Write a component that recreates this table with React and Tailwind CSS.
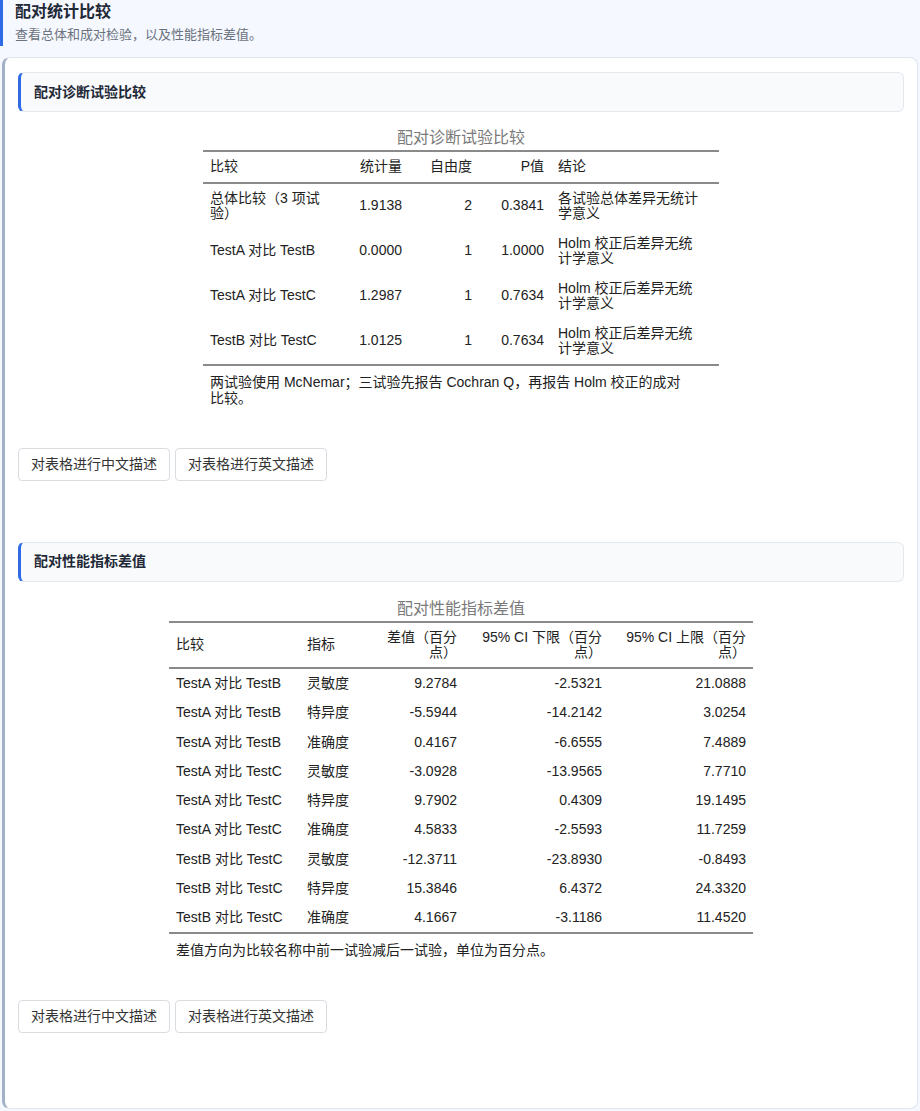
import React from "react";

const FONT = { fontFamily: '"Liberation Sans", "Noto Sans CJK SC", sans-serif' };

function SectionHeader({ title }) {
  return (
    <div className="h-[40px] flex items-center rounded-[6px] border border-[#e3e8ef] border-l-[3px] border-l-[#2f6be6] bg-[#f8fafc] pl-[13px]">
      <span className="text-[14px] font-bold text-[#1f2937]">{title}</span>
    </div>
  );
}

function Buttons() {
  return (
    <div className="flex gap-[5px] mt-[42px]">
      <button className="h-[33px] px-[12px] rounded-[4px] border border-[#d9dce1] bg-white text-[14px] text-[#333]">
        对表格进行中文描述
      </button>
      <button className="h-[33px] px-[12px] rounded-[4px] border border-[#d9dce1] bg-white text-[14px] text-[#333]">
        对表格进行英文描述
      </button>
    </div>
  );
}

const t1 = [
  [["总体比较（3 项试", "验）"], "1.9138", "2", "0.3841", ["各试验总体差异无统计", "学意义"]],
  [["TestA 对比 TestB"], "0.0000", "1", "1.0000", ["Holm 校正后差异无统", "计学意义"]],
  [["TestA 对比 TestC"], "1.2987", "1", "0.7634", ["Holm 校正后差异无统", "计学意义"]],
  [["TestB 对比 TestC"], "1.0125", "1", "0.7634", ["Holm 校正后差异无统", "计学意义"]],
];

const t2 = [
  ["TestA 对比 TestB", "灵敏度", "9.2784", "-2.5321", "21.0888"],
  ["TestA 对比 TestB", "特异度", "-5.5944", "-14.2142", "3.0254"],
  ["TestA 对比 TestB", "准确度", "0.4167", "-6.6555", "7.4889"],
  ["TestA 对比 TestC", "灵敏度", "-3.0928", "-13.9565", "7.7710"],
  ["TestA 对比 TestC", "特异度", "9.7902", "0.4309", "19.1495"],
  ["TestA 对比 TestC", "准确度", "4.5833", "-2.5593", "11.7259"],
  ["TestB 对比 TestC", "灵敏度", "-12.3711", "-23.8930", "-0.8493"],
  ["TestB 对比 TestC", "特异度", "15.3846", "6.4372", "24.3320"],
  ["TestB 对比 TestC", "准确度", "4.1667", "-3.1186", "11.4520"],
];

function Lines({ parts }) {
  return parts.map((p, i) => (
    <React.Fragment key={i}>
      {i > 0 && <br />}
      {p}
    </React.Fragment>
  ));
}

const c1 = "py-[7px] px-[7px] leading-[15.5px] font-normal align-middle whitespace-nowrap";
const c2 = "py-[7px] px-[7px] leading-[15.25px] font-normal align-middle whitespace-nowrap";

function Table1() {
  return (
    <div className="w-[516px] mx-auto mt-[14px] text-[14px] text-[#222]">
      <div className="text-center text-[16px] leading-[24px] text-[#7a7a7a]">配对诊断试验比较</div>
      <table className="w-[516px] table-fixed border-collapse">
        <colgroup>
          <col className="w-[127px]" />
          <col className="w-[79px]" />
          <col className="w-[70px]" />
          <col className="w-[72px]" />
          <col className="w-[168px]" />
        </colgroup>
        <thead>
          <tr className="border-t-2 border-b-2 border-[#8a8a8a]">
            <th className={`${c1} text-left`}>比较</th>
            <th className={`${c1} text-right`}>统计量</th>
            <th className={`${c1} text-right`}>自由度</th>
            <th className={`${c1} text-right`}>P值</th>
            <th className={`${c1} text-left`}>结论</th>
          </tr>
        </thead>
        <tbody className="border-b-2 border-[#8a8a8a]">
          {t1.map((r, i) => (
            <tr key={i}>
              <td className={`${c1} text-left`}><Lines parts={r[0]} /></td>
              <td className={`${c1} text-right`}>{r[1]}</td>
              <td className={`${c1} text-right`}>{r[2]}</td>
              <td className={`${c1} text-right`}>{r[3]}</td>
              <td className={`${c1} text-left`}><Lines parts={r[4]} /></td>
            </tr>
          ))}
        </tbody>
      </table>
      <div className="pt-[8px] px-[7px] leading-[16px]">
        两试验使用 McNemar；三试验先报告 Cochran Q，再报告 Holm 校正的成对
        <br />
        比较。
      </div>
    </div>
  );
}

function Table2() {
  return (
    <div className="w-[584px] mx-auto mt-[15px] text-[14px] text-[#222]">
      <div className="text-center text-[16px] leading-[24px] text-[#7a7a7a]">配对性能指标差值</div>
      <table className="w-[584px] table-fixed border-collapse">
        <colgroup>
          <col className="w-[131px]" />
          <col className="w-[71px]" />
          <col className="w-[93px]" />
          <col className="w-[145px]" />
          <col className="w-[144px]" />
        </colgroup>
        <thead>
          <tr className="border-t-2 border-b-2 border-[#8a8a8a]">
            <th className={`${c2} text-left`}>比较</th>
            <th className={`${c2} text-left`}>指标</th>
            <th className={`${c2} text-right`}>差值（百分<br />点）</th>
            <th className={`${c2} text-right`}>95% CI 下限（百分<br />点）</th>
            <th className={`${c2} text-right`}>95% CI 上限（百分<br />点）</th>
          </tr>
        </thead>
        <tbody className="border-b-2 border-[#8a8a8a]">
          {t2.map((r, i) => (
            <tr key={i}>
              <td className={`${c2} text-left`}>{r[0]}</td>
              <td className={`${c2} text-left`}>{r[1]}</td>
              <td className={`${c2} text-right`}>{r[2]}</td>
              <td className={`${c2} text-right`}>{r[3]}</td>
              <td className={`${c2} text-right`}>{r[4]}</td>
            </tr>
          ))}
        </tbody>
      </table>
      <div className="pt-[8px] px-[7px] leading-[16px]">
        差值方向为比较名称中前一试验减后一试验，单位为百分点。
      </div>
    </div>
  );
}

export default function App() {
  return (
    <div style={FONT} className="w-[920px] h-[1111px] bg-[#f5f8fe] overflow-hidden">
      <div className="h-[46px] border-l-[3px] border-[#2f6be6] pl-[12px] flex flex-col justify-center">
        <div className="text-[16px] font-bold text-[#1f2937] leading-[20px] -mt-[1px]">配对统计比较</div>
        <div className="text-[13px] text-[#6b7280] leading-[18px] mt-[4px]">查看总体和成对检验，以及性能指标差值。</div>
      </div>
      <div className="mt-[11px] mx-[2px] rounded-[8px] border border-[#dfe5ee] border-l-[3px] border-l-[#a3b1c6] bg-white px-[13px] pt-[14px] pb-[75px]">
        <SectionHeader title="配对诊断试验比较" />
        <Table1 />
        <Buttons />
        <div className="mt-[61px]">
          <SectionHeader title="配对性能指标差值" />
        </div>
        <Table2 />
        <Buttons />
      </div>
    </div>
  );
}
